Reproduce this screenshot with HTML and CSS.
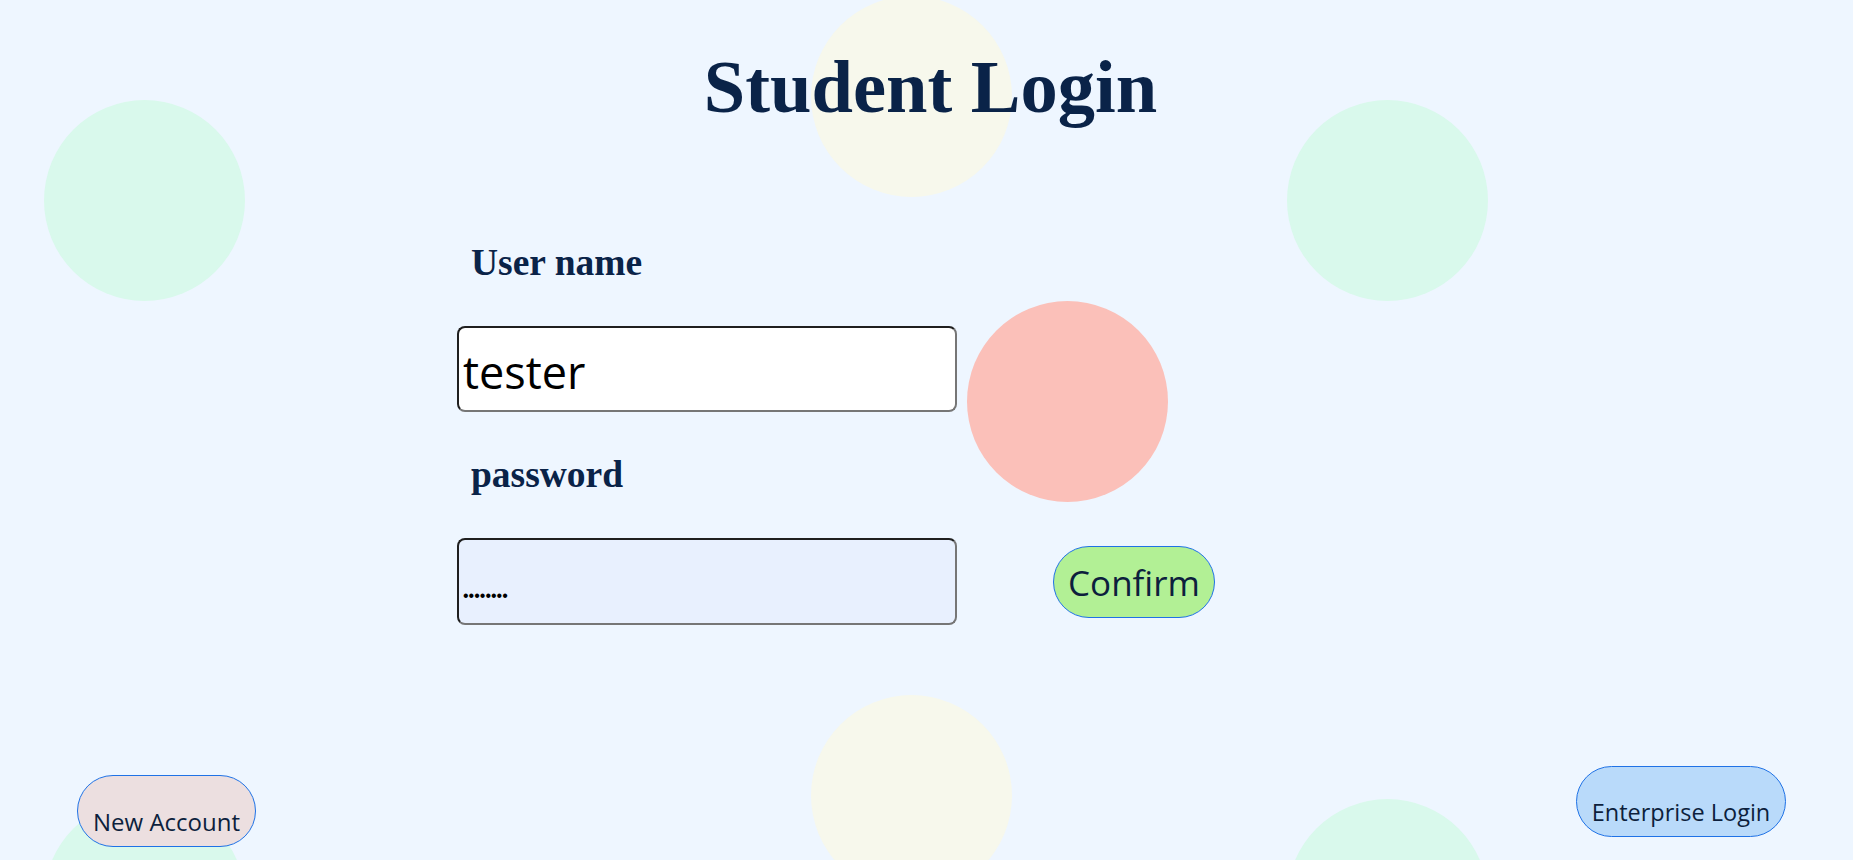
FILE: index.html
```html
<!DOCTYPE html>
<html lang="en">
<head>
<meta charset="utf-8">
<title>Student Login</title>
<link rel="stylesheet" href="styles.css">
</head>
<body>
<div class="page">
  <div class="bubbles" aria-hidden="true">
    <span class="bubble green b-left"></span>
    <span class="bubble green b-right"></span>
    <span class="bubble yellow b-top"></span>
    <span class="bubble pink b-pink"></span>
    <span class="bubble yellow b-bottom"></span>
    <span class="bubble green b-br"></span>
    <span class="bubble green b-bl"></span>
  </div>
  <main class="content">
    <h1 class="title">Student Login</h1>
    <form class="form" onsubmit="return false">
      <label class="label" for="user">User name</label>
      <input class="field" id="user" type="text" value="tester">
      <label class="label" for="pw">password</label>
      <div class="row">
        <input class="field pw" id="pw" type="password" value="password">
        <button class="btn confirm" type="submit">Confirm</button>
      </div>
    </form>
    <div class="footer">
      <button class="btn pill new" type="button">New Account</button>
      <button class="btn pill enterprise" type="button">Enterprise Login</button>
    </div>
  </main>
</div>
</body>
</html>
```
FILE: styles.css
```css
* { box-sizing: border-box; }

html, body {
  margin: 0;
  padding: 0;
  background: #eef6ff;
}

.page {
  position: relative;
  height: 860px;
  overflow: hidden;
  background: #eef6ff;
}

.bubbles {
  position: absolute;
  inset: 0;
  z-index: 0;
}

.bubble {
  position: absolute;
  width: 201px;
  height: 201px;
  border-radius: 50%;
}

.green { background: #d9f9ec; }
.yellow { background: #f7f8ec; }
.pink { background: #fbc0b9; }

.b-left { left: 44px; top: 100px; }
.b-right { left: 1287px; top: 100px; }
.b-top { left: 811px; top: -4px; }
.b-pink { left: 967px; top: 301px; }
.b-bottom { left: 811px; top: 695px; }
.b-br { left: 1287px; top: 799px; }
.b-bl { left: 44px; top: 799px; }

.content {
  position: relative;
  z-index: 1;
  display: flex;
  flex-direction: column;
}

.title {
  margin: 49.5px 0 0;
  height: 74.5px;
  font-family: "Liberation Serif", "Times New Roman", serif;
  font-weight: bold;
  font-size: 74.5px;
  line-height: 1;
  color: #0a2348;
  text-align: center;
  padding-left: 8px;
}

.form {
  display: flex;
  flex-direction: column;
  align-items: flex-start;
  margin: 120px 0 0 457px;
}

.label {
  display: block;
  padding-left: 14px;
  font-family: "Liberation Serif", "Times New Roman", serif;
  font-weight: bold;
  font-size: 37.5px;
  line-height: 1;
  color: #0a2348;
}

.field {
  display: block;
  width: 500px;
  height: 86px;
  margin: 44.5px 0 44px;
  padding: 5px 4px 0;
  border: 2px solid;
  border-color: #1f1f1f #767676 #767676 #1f1f1f;
  border-radius: 8px;
  background: #ffffff;
  font-family: "Open Sans", "Noto Sans", sans-serif;
  font-size: 45px;
  color: #000000;
  outline: none;
}

.row {
  display: flex;
  align-items: center;
  gap: 96px;
  margin-top: 44.5px;
}

.field.pw {
  margin: 0;
  height: 87px;
  padding: 29px 4px 0;
  background: #e8f0fe;
  font-family: "Liberation Sans", Arial, sans-serif;
  font-size: 16px;
}

.btn {
  border: 1px solid #1f72e6;
  border-radius: 40px;
  font-family: "Open Sans", "Noto Sans", sans-serif;
  color: #0d1f3d;
  cursor: pointer;
}

.confirm {
  width: 162px;
  height: 72px;
  padding: 2px 0 0;
  background: #b2f095;
  font-size: 35px;
}

.footer {
  display: flex;
  justify-content: space-between;
  align-items: flex-start;
  margin-top: 141px;
  padding: 0 67px 0 77px;
}

.pill {
  height: 72px;
  padding: 20px 0 0;
  font-size: 24px;
}

.new {
  width: 179px;
  margin-top: 9px;
  background: #ecdfe0;
}

.enterprise {
  width: 210px;
  height: 71px;
  font-size: 23.5px;
  background: #b9dafa;
}
```
